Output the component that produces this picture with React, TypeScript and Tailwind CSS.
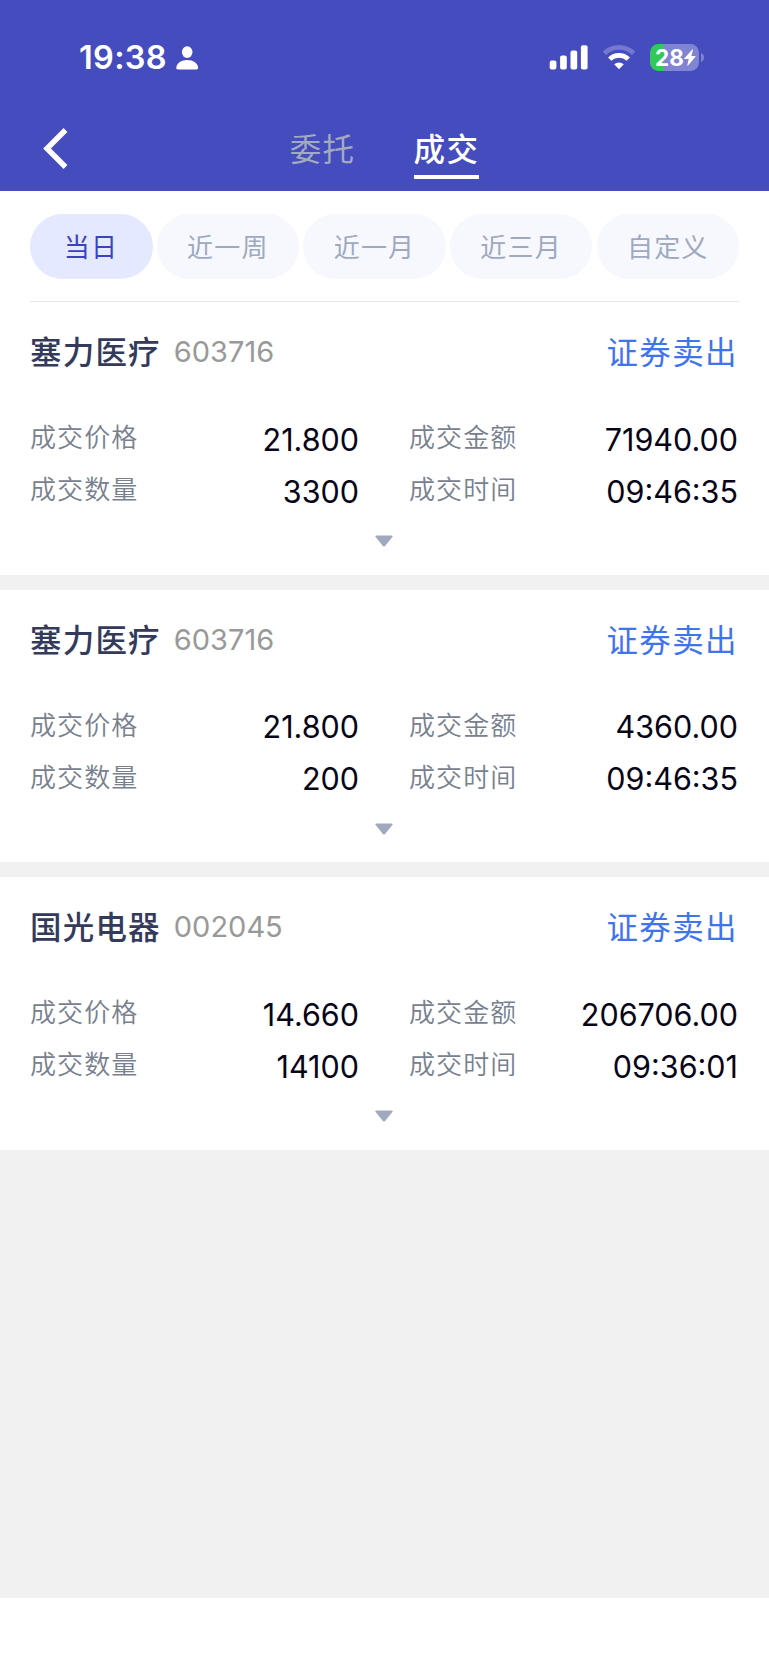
interface Trade {
  id: number;
  name: string;
  code: string;
  side: string;
  price: string;
  amount: string;
  quantity: string;
  time: string;
}

const trades: Trade[] = [
  { id: 1, name: "塞力医疗", code: "603716", side: "证券卖出", price: "21.800", amount: "71940.00", quantity: "3300", time: "09:46:35" },
  { id: 2, name: "塞力医疗", code: "603716", side: "证券卖出", price: "21.800", amount: "4360.00", quantity: "200", time: "09:46:35" },
  { id: 3, name: "国光电器", code: "002045", side: "证券卖出", price: "14.660", amount: "206706.00", quantity: "14100", time: "09:36:01" },
];

const ranges = ["当日", "近一周", "近一月", "近三月", "自定义"];

function StatusBar() {
  return (
    <div className="flex h-[115px] items-center justify-between pl-[79px] pr-[65px]">
      <div className="flex items-center gap-[9px]">
        <span className="mt-px w-[88px] whitespace-nowrap text-[32.500px] leading-[38px] font-semibold tracking-[0.300px]">19:38</span>
        <svg className="h-6 w-[23px]" viewBox="0 0 23 24" fill="currentColor">
          <ellipse cx="11.2" cy="6.1" rx="5.3" ry="5.9" />
          <path d="M2 23.4c-1.3 0-1.8-.8-1.7-2C.8 17.200 5.300 14 11.200 14s10.400 3.200 10.900 7.400c.1 1.200-.4 2-1.700 2z" />
        </svg>
      </div>
      <div className="flex items-center">
        <svg className="h-[25px] w-[39px]" viewBox="0 0 39 25" fill="currentColor">
          <rect x="0.700" y="15.500" width="6.700" height="9" rx="2" />
          <rect x="11.100" y="10.600" width="6.700" height="13.900" rx="2" />
          <rect x="21.500" y="5.500" width="6.700" height="19" rx="2" />
          <rect x="31.900" y="0.300" width="6.700" height="24.200" rx="2" />
        </svg>
        <svg className="ml-[14px] h-[25px] w-[34px]" viewBox="0 0 34 25" fill="none">
          <path d="M2.400 8.300a21 21 0 0 1 29.200 0" stroke="currentColor" strokeOpacity="0.25" strokeWidth="4.600" />
          <path d="M7.700 14.100a13.400 13.400 0 0 1 18.600 0" stroke="currentColor" strokeWidth="4.600" />
          <path d="M12.200 19.300a7 7 0 0 1 9.600 0L17 24.300z" fill="currentColor" />
        </svg>
        <div className="ml-[14px] flex items-center">
          <div className="flex h-[27px] w-[49px] items-center rounded-[8.500px] bg-[linear-gradient(to_right,#34c759_13.500px,#8084d3_13.500px)] pl-[5px]">
            <span className="w-[29px] text-[22.500px] leading-[27px] font-bold">28</span>
            <svg className="h-[17px] w-[12px]" viewBox="0 0 12 17" fill="currentColor">
              <path d="M8.300 .6 .4 9.300c-.3.400-.1.800.3.800h4L3.400 16c-.1.700.3.900.7.500l7.300-8.700c.3-.4.2-.8-.3-.8H7.300L9 1.100c.2-.6-.3-.9-.7-.5z" />
            </svg>
          </div>
          <svg className="ml-[2px] h-[9px] w-[3px]" viewBox="0 0 3 9">
            <path d="M0 0c2 .8 3 2.500 3 4.500S2 8.200 0 9z" fill="#8084d3" />
          </svg>
        </div>
      </div>
    </div>
  );
}

function Field({ label, value }: { label: string; value: string }) {
  return (
    <div className="flex h-[52px] items-center justify-between">
      <span className="mt-[2px] text-[26px] leading-[36px] font-[350] tracking-[1.100px] text-[#78808f]">{label}</span>
      <span className="mt-[5px] text-[30.500px] leading-[36px] text-[#070517]">{value}</span>
    </div>
  );
}

function TradeCard({ trade }: { trade: Trade }) {
  return (
    <div className="flex h-[272.500px] flex-col bg-white pr-[31px] pl-[30px]">
      <div className="flex h-[109px] items-start justify-between pt-[28px]">
        <div className="flex items-center">
          <span className="text-[31.500px] leading-[46px] font-medium tracking-[1.200px] text-[#343a5b]">{trade.name}</span>
          <span className="-mt-[2px] ml-[13px] text-[29px] leading-[46px] text-[#999]">{trade.code}</span>
        </div>
        <span className="text-[31.500px] leading-[46px] tracking-[1.400px] text-[#3f74ed]">{trade.side}</span>
      </div>
      <div className="grid grid-cols-[329px_329px] gap-x-[50px]">
        <Field label="成交价格" value={trade.price} />
        <Field label="成交金额" value={trade.amount} />
        <Field label="成交数量" value={trade.quantity} />
        <Field label="成交时间" value={trade.time} />
      </div>
      <svg className="mx-auto mt-[20px] h-[13px] w-[18px] shrink-0" viewBox="0 0 18 13">
        <path d="M1.200 .5h15.600c.9 0 1.200.8.6 1.500l-7.300 9c-.7.800-1.500.8-2.200 0L.6 2C0 1.300.3.500 1.200.5z" fill="#a0aabf" />
      </svg>
    </div>
  );
}

export default function App() {
  return (
    <div className="flex h-[1665px] w-[769px] flex-col overflow-hidden bg-white font-[Inter,'Noto_Sans_CJK_SC',sans-serif]">
      <header className="h-[191px] shrink-0 bg-[#444cbe] text-white">
        <StatusBar />
        <nav className="grid h-[76px] grid-cols-[1fr_auto_1fr]">
          <button className="ml-[43px] mt-[13px] h-[41px] w-[26px]">
            <svg className="h-[41px] w-[26px]" viewBox="0 0 26 41" fill="none">
              <path d="M22.500 2 4 20.500 22.500 39" stroke="currentColor" strokeWidth="5.400" />
            </svg>
          </button>
          <div className="flex gap-[58px] pt-[12px] text-[31.500px] leading-[46px] tracking-[1.400px]">
            <span className="h-[52px] text-[#a1aabf]">委托</span>
            <span className="h-[52px] border-b-[4.500px] border-white font-medium">成交</span>
          </div>
          <span />
        </nav>
      </header>

      <div className="mr-[30px] ml-[29.500px] flex h-[111px] shrink-0 items-start justify-between border-b border-[#e6e7e9] pt-[23px]">
        {ranges.map((range, i) => (
          <button
            key={range}
            className={`h-[65px] rounded-full pt-[2px] text-[26px] tracking-[1.200px] ${
              i === 0 ? "w-[123px] bg-[#e5e9ff] text-[#3c44bd]" : "w-[142.500px] bg-[#f7f8fd] text-[#9fa9c0]"
            }`}
          >
            {range}
          </button>
        ))}
      </div>

      <main className="flex h-[1296px] shrink-0 flex-col gap-[15px] bg-[#f1f1f1]">
        {trades.map((trade) => (
          <TradeCard key={trade.id} trade={trade} />
        ))}
      </main>
    </div>
  );
}
